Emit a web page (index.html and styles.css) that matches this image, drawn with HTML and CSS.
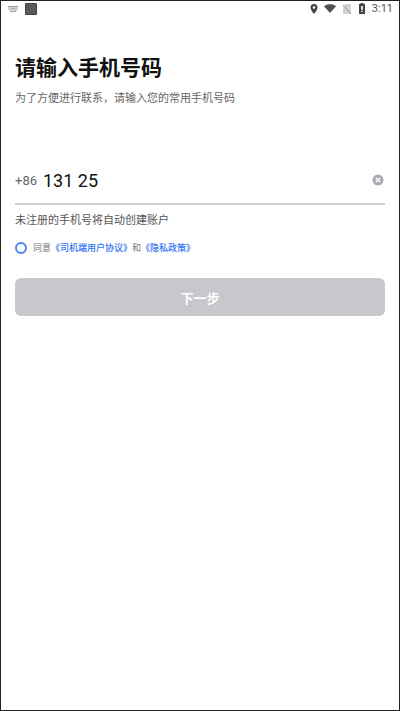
FILE: index.html
```
<!DOCTYPE html>
<html lang="zh-CN">

<head>
    <meta charset="UTF-8">
    <meta name="viewport" content="width=device-width, initial-scale=1.0">
    <title>请输入手机号码</title>
    <link rel="stylesheet" href="styles.css">
</head>

<body>
    <header class="status-bar">
        <div class="status-left">
            <svg width="12" height="12" viewBox="0 0 12 12">
                <path d="M1 3h10v2c0 2.500-2 4-5 4s-5-1.500-5-4z" fill="#d4d4d4" />
                <path d="M1 3.500h10M3 5.500l1 1M5 5.500h2M9 5.500l-1 1M3 8c2 1 4 1 6 0" fill="none" stroke="#999" />
            </svg>
            <svg width="12" height="12" viewBox="0 0 12 12">
                <rect width="12" height="12" rx="1" fill="#444" />
                <rect x="1" y="1" width="10" height="10" fill="#595959" />
            </svg>
        </div>
        <div class="status-right">
            <svg width="8" height="12" viewBox="0 0 8 12">
                <path fill-rule="evenodd" d="M4 1a3.500 3.500 0 0 0-3.500 3.500C.5 7 4 11 4 11s3.500-4 3.500-6.500A3.500 3.500 0 0 0 4 1zm0 2.200a1.300 1.300 0 1 1 0 2.600 1.300 1.300 0 0 1 0-2.600z" fill="#444" />
            </svg>
            <svg width="12" height="12" viewBox="0 0 12 12">
                <path d="M0 3.200C3.500.6 8.500.6 12 3.200L6 10z" fill="#505050" />
            </svg>
            <svg width="10" height="12" viewBox="0 0 10 12">
                <path d="M3.500 1H9v10H1V3.500z" fill="#d2d2d2" />
                <path d="M1 2l8 9" stroke="#999" />
            </svg>
            <svg width="8" height="12" viewBox="0 0 8 12">
                <path d="M2.500 0h3v1H7v10H1V1h1.500z" fill="#444" />
                <path d="M3 3h2v4H3zM3 8h2v1H3z" fill="#ddd" />
            </svg>
            <time>3:11</time>
        </div>
    </header>

    <main>
        <h1>请输入手机号码</h1>
        <p class="subtitle">为了方便进行联系，请输入您的常用手机号码</p>

        <form>
            <div class="phone-field">
                <label for="phone">+86</label>
                <input type="tel" id="phone" value="131 25">
                <button type="button" class="clear-button" aria-label="清除">
                    <svg width="12" height="12" viewBox="0 0 12 12">
                        <circle cx="6" cy="6" r="5.500" fill="#a9acb5" />
                        <path d="M3.800 3.800l4.400 4.400M8.200 3.800l-4.400 4.400" stroke="#fff" stroke-width="1.300" />
                    </svg>
                </button>
            </div>
            <p class="hint">未注册的手机号将自动创建账户</p>
            <div class="agreement">
                <input type="checkbox" id="agree">
                <p><label for="agree">同意</label><a href="#">《司机端用户协议》</a>和<a href="#">《隐私政策》</a></p>
            </div>
            <button type="submit" class="next-button">下一步</button>
        </form>
    </main>
</body>

</html>
```
FILE: styles.css
```
* {
    box-sizing: border-box;
}

body {
    font-family: Roboto, "Noto Sans CJK SC", sans-serif;
    margin: 0;
    min-height: 100vh;
    border: 1px solid #222;
    background-color: #fff;
    color: #111;
}

h1,
p {
    margin: 0;
}

svg {
    display: block;
}

/* Status bar */
.status-bar {
    display: flex;
    justify-content: space-between;
    height: 16px;
    padding: 0 6px;
    align-items: center;
}

.status-left,
.status-right {
    display: flex;
    align-items: center;
    gap: 6px;
}

.status-right {
    font-size: 11px;
    line-height: 16px;
    color: #555;
}

main {
    padding: 35px 14px 0;
}

h1 {
    font-size: 21px;
    line-height: 32px;
    font-weight: 700;
}

.subtitle {
    margin-top: 6px;
    font-size: 11px;
    line-height: 18px;
    color: #666;
}

/* Phone form */
.phone-field {
    display: flex;
    align-items: center;
    height: 48px;
    margin-top: 49px;
    border-bottom: 2px solid #d0d2d2;
}

.phone-field label {
    font-size: 13px;
    color: #666;
}

.phone-field input {
    flex: 1;
    min-width: 0;
    margin-left: 6px;
    padding: 0;
    border: none;
    outline: none;
    background: none;
    font-family: inherit;
    font-size: 18px;
    color: #111;
}

.clear-button {
    margin-right: 1px;
    padding: 0;
    border: none;
    background: none;
}

.hint {
    margin-top: 6px;
    font-size: 11px;
    line-height: 20px;
    color: #555;
}

.agreement {
    display: flex;
    align-items: center;
    gap: 6px;
    margin-top: 8px;
    font-size: 9px;
    line-height: 18px;
    color: #777;
}

.agreement input {
    appearance: none;
    width: 12px;
    height: 12px;
    margin: 0;
    border: 2px solid #4a86f7;
    border-radius: 50%;
}

.agreement input:checked {
    background-color: #4a86f7;
}

.agreement a {
    color: #2f72f5;
    font-weight: 500;
    text-decoration: none;
}

.next-button {
    display: block;
    width: 100%;
    height: 38px;
    margin-top: 21px;
    border: none;
    border-radius: 6px;
    background-color: #c7c8cc;
    color: #fff;
    font-family: inherit;
    font-size: 13px;
    font-weight: 700;
}
```
